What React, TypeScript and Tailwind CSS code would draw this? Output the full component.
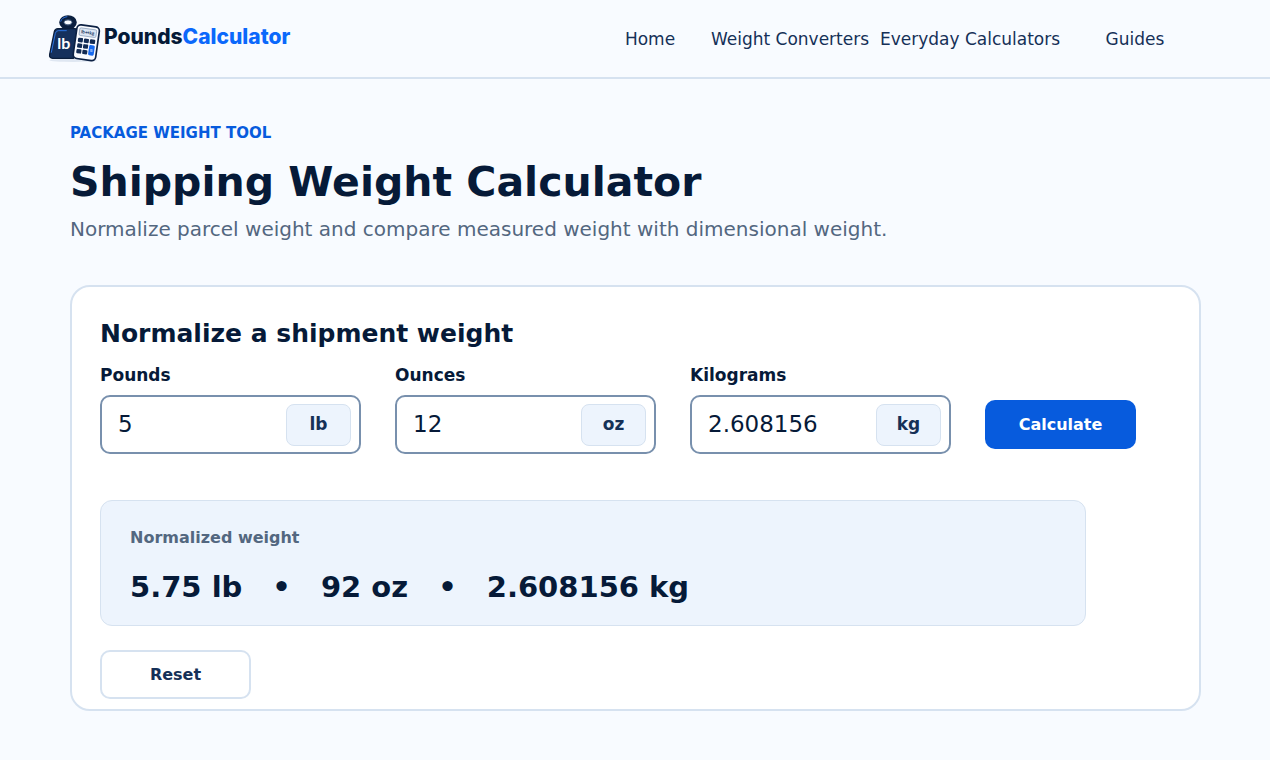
import { useState } from "react";

type FieldProps = {
  id: string;
  label: string;
  unit: string;
  value: string;
  onChange: (value: string) => void;
};

const OZ_PER_LB = 16;
const KG_PER_LB = 0.45359237;

const links = [
  { label: "Home", href: "#home" },
  { label: "Weight Converters", href: "#weight" },
  { label: "Everyday Calculators", href: "#everyday" },
  { label: "Guides", href: "#guides" },
];

const trim = (n: number) => String(Number(n.toFixed(6)));

const LogoMark = () => (
  <svg width="53" height="49" viewBox="24 27 159 147" aria-hidden="true">
    <ellipse cx="100" cy="166" rx="72" ry="5" fill="#dfe7f2" />
    {/* kettle weight */}
    <ellipse cx="84" cy="52" rx="19" ry="14" fill="none" stroke="#0b1f3f" strokeWidth="15" />
    <ellipse cx="84" cy="52" rx="12" ry="8" fill="none" stroke="#5c7599" strokeWidth="2" />
    <path d="M62 50c2-9 10-14 20-15" fill="none" stroke="#2b6fd6" strokeWidth="3" />
    <path d="M70 65h29l4 12H66z" fill="#0b1f3f" />
    <path
      d="M54 71h52l6 8-12 81H38q-11-1-9-12l14-68q2-9 11-9z"
      fill="#15305c"
      stroke="#0a1d3b"
      strokeWidth="4"
      strokeLinejoin="round"
    />
    <path d="M34 142l12-57q2-8 9-8h24" fill="none" stroke="#2b73df" strokeWidth="3" strokeLinecap="round" />
    <text x="52" y="131" fontSize="48" fontWeight="700" fill="#fff" fontFamily="Lato, sans-serif">
      lb
    </text>
    {/* calculator */}
    <g transform="rotate(8 138 112)">
      <rect x="105" y="62" width="68" height="102" rx="12" fill="#f9fbff" stroke="#0c2144" strokeWidth="5" />
      <rect x="114" y="71" width="51" height="23" rx="4" fill="#dbe6f3" stroke="#8095b2" strokeWidth="2" />
      <text x="119" y="87" fontSize="14" fontWeight="700" fill="#18345f" fontFamily="Lato, sans-serif">
        lb↔kg
      </text>
      <g fill="#122b53">
        <rect x="113" y="101" width="15" height="13" rx="3" />
        <rect x="131" y="101" width="15" height="13" rx="3" />
        <rect x="149" y="101" width="16" height="13" rx="3" />
        <rect x="113" y="118" width="15" height="13" rx="3" />
        <rect x="131" y="118" width="15" height="13" rx="3" />
        <rect x="113" y="135" width="15" height="13" rx="3" />
        <rect x="131" y="135" width="15" height="13" rx="3" />
      </g>
      <rect x="149" y="118" width="17" height="31" rx="4" fill="#1669ef" />
      <path d="M154 132h7M154 136h7" stroke="#fff" strokeWidth="2" />
    </g>
  </svg>
);

const WeightField = ({ id, label, unit, value, onChange }: FieldProps) => (
  <div className="min-w-0">
    <label htmlFor={id} className="mb-2 block text-[17px] leading-6 font-bold">
      {label}
    </label>
    <div className="flex h-[59px] items-center rounded-[10px] border-2 border-[#7890ad] bg-white pr-2 pl-4">
      <input
        id={id}
        type="text"
        inputMode="decimal"
        value={value}
        onChange={(e) => onChange(e.target.value)}
        className="w-full min-w-0 flex-1 bg-transparent text-[23px] outline-none"
      />
      <span className="flex h-[42px] w-[65px] shrink-0 items-center justify-center rounded-lg border border-[#d6e2f0] bg-[#edf4fd] text-[17px] font-bold text-[#153057]">
        {unit}
      </span>
    </div>
  </div>
);

export default function App() {
  const [pounds, setPounds] = useState("5");
  const [ounces, setOunces] = useState("12");
  const [kilograms, setKilograms] = useState("2.608156");
  const [total, setTotal] = useState(5.75);

  // pounds and ounces drive the kilogram box
  const updateImperial = (lb: string, oz: string) => {
    setPounds(lb);
    setOunces(oz);
    const sum = (Number(lb) || 0) + (Number(oz) || 0) / OZ_PER_LB;
    setKilograms(trim(sum * KG_PER_LB));
  };

  const updateKilograms = (kg: string) => {
    setKilograms(kg);
    const lb = (Number(kg) || 0) / KG_PER_LB;
    setPounds(String(Math.floor(lb)));
    setOunces(trim((lb - Math.floor(lb)) * OZ_PER_LB));
  };

  const handleCalculate = (e: React.FormEvent) => {
    e.preventDefault();
    setTotal((Number(pounds) || 0) + (Number(ounces) || 0) / OZ_PER_LB);
  };

  const handleReset = () => {
    updateImperial("5", "12");
    setTotal(5.75);
  };

  return (
    <div className="min-h-screen bg-[#f8fbff] font-['DejaVu_Sans',sans-serif] text-[#061a38]">
      <header className="flex flex-wrap items-center justify-between border-b-2 border-[#d6e2f0] pr-[60px] pl-12">
        <a href="#home" className="flex h-[77px] items-center gap-[3px]">
          <LogoMark />
          <span className="pb-1 font-[Inter,sans-serif] text-[21px] leading-7 font-extrabold">
            Pounds<span className="text-[#0b68fb]">Calculator</span>
          </span>
        </a>
        <nav className="grid grid-cols-2 justify-items-center text-[17px] leading-6 whitespace-nowrap text-[#153057] md:grid-cols-[100px_180px_180px_150px]">
          {links.map((link) => (
            <a key={link.label} href={link.href}>
              {link.label}
            </a>
          ))}
        </nav>
      </header>

      <main className="pt-11 pr-[69px] pb-12 pl-[70px]">
        <p className="text-[15px] leading-5 font-bold text-[#075bdd]">PACKAGE WEIGHT TOOL</p>
        <h1 className="mt-[15px] text-[41px] leading-12 font-bold">Shipping Weight Calculator</h1>
        <p className="mt-[9px] text-xl leading-7 text-[#536780]">
          Normalize parcel weight and compare measured weight with dimensional weight.
        </p>

        <form
          onSubmit={handleCalculate}
          className="mt-[42px] rounded-[20px] border-2 border-[#d6e2f0] bg-white px-7 pt-[31px] pb-[10px]"
        >
          <h2 className="text-[25px] leading-8 font-bold">Normalize a shipment weight</h2>

          <div className="mt-[13px] grid items-end gap-[34px] md:mr-[35px] md:grid-cols-[1fr_1fr_1fr_151px]">
            <WeightField
              id="pounds"
              label="Pounds"
              unit="lb"
              value={pounds}
              onChange={(v) => updateImperial(v, ounces)}
            />
            <WeightField
              id="ounces"
              label="Ounces"
              unit="oz"
              value={ounces}
              onChange={(v) => updateImperial(pounds, v)}
            />
            <WeightField
              id="kilograms"
              label="Kilograms"
              unit="kg"
              value={kilograms}
              onChange={updateKilograms}
            />
            <button
              type="submit"
              className="mb-[5px] h-[49px] cursor-pointer rounded-[10px] bg-[#075bdd] font-bold text-white"
            >
              Calculate
            </button>
          </div>

          <section className="mt-[46px] rounded-xl border border-[#d6e2f0] bg-[#edf4fd] px-[29px] pt-[25px] pb-[18px] md:mr-[85px]">
            <h3 className="leading-6 font-bold text-[#536780]">Normalized weight</h3>
            <p className="mt-[17px] flex flex-wrap gap-x-[30px] text-[29px] leading-10 font-bold">
              <span>{trim(total)} lb</span>
              <span>•</span>
              <span>{trim(total * OZ_PER_LB)} oz</span>
              <span>•</span>
              <span>{trim(total * KG_PER_LB)} kg</span>
            </p>
          </section>

          <button
            type="button"
            onClick={handleReset}
            className="mt-6 block h-[49px] w-[151px] cursor-pointer rounded-[10px] border-2 border-[#d6e2f0] bg-white font-bold text-[#153057]"
          >
            Reset
          </button>
        </form>
      </main>
    </div>
  );
}
